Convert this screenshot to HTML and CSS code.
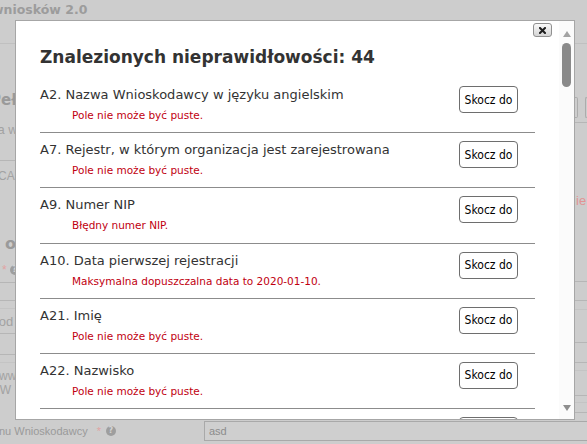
FILE: index.html
```html
<!DOCTYPE html>
<html lang="pl">
<head>
<meta charset="utf-8">
<title>Znalezione nieprawidłowości</title>
<link rel="stylesheet" href="styles.css">
</head>
<body>
<div class="page">
  <header class="bg-header"><span class="bg-brand">wniosków 2.0</span></header>
  <div class="bg-main">
    <div class="bg-col bg-left">
      <div class="l-title">Pełna</div>
      <div class="l-text1">Nazwa w języku</div>
      <div class="bg-line l-line1"></div>
      <div class="l-ca">CA</div>
      <div class="l-os">Dane osoby</div>
      <div class="l-help"><span class="req">*</span><span class="help">?</span></div>
      <div class="bg-line l-line2"></div>
      <div class="bg-line l-line3"></div>
      <div class="bg-line l-line4 light"></div>
      <div class="l-kod">Kod</div>
      <div class="bg-line l-line5"></div>
      <div class="bg-line l-line6"></div>
      <div class="bg-line l-line7 light"></div>
      <div class="l-ww">www</div>
      <div class="l-nw">Imien W</div>
    </div>
    <div class="bg-col bg-center"></div>
    <div class="bg-col bg-right">
      <div class="r-inputs"><span class="r-box1"></span><span class="r-box2"></span></div>
      <div class="bg-line r-line1"></div>
      <div class="r-ie">ie</div>
      <div class="bg-line r-l2"></div>
      <div class="bg-line r-l3"></div>
      <div class="bg-line r-l4 light"></div>
      <div class="bg-line r-l5"></div>
      <div class="bg-line r-l6"></div>
      <div class="bg-line r-l7 light"></div>
      <div class="bg-line r-l8"></div>
      <div class="bg-line r-l9 light"></div>
      <div class="bg-line r-l10"></div>
    </div>
  </div>
  <div class="bg-bottom">
    <div class="b-label"><span class="b-text">nu Wnioskodawcy</span><span class="req b-req">*</span><span class="help b-help">?</span></div>
    <div class="b-input">asd</div>
  </div>
</div>

<div class="dialog" role="dialog">
  <button class="dlg-close" type="button" aria-label="Zamknij">
    <svg width="7" height="7" viewBox="0 0 7 7"><path d="M1 1 L6 6 M6 1 L1 6" stroke="#1e1e1e" stroke-width="2" stroke-linecap="square"/></svg>
  </button>
  <div class="dlg-content">
    <h2 class="dlg-title">Znalezionych nieprawidłowości: 44</h2>
    <div class="err-item">
      <div class="item-text">
        <div class="item-label">A2. Nazwa Wnioskodawcy w języku angielskim</div>
        <div class="item-error">Pole nie może być puste.</div>
      </div>
      <button class="jump-btn" type="button">Skocz do</button>
    </div>
    <div class="err-item">
      <div class="item-text">
        <div class="item-label">A7. Rejestr, w którym organizacja jest zarejestrowana</div>
        <div class="item-error">Pole nie może być puste.</div>
      </div>
      <button class="jump-btn" type="button">Skocz do</button>
    </div>
    <div class="err-item">
      <div class="item-text">
        <div class="item-label">A9. Numer NIP</div>
        <div class="item-error">Błędny numer NIP.</div>
      </div>
      <button class="jump-btn" type="button">Skocz do</button>
    </div>
    <div class="err-item">
      <div class="item-text">
        <div class="item-label">A10. Data pierwszej rejestracji</div>
        <div class="item-error">Maksymalna dopuszczalna data to 2020-01-10.</div>
      </div>
      <button class="jump-btn" type="button">Skocz do</button>
    </div>
    <div class="err-item">
      <div class="item-text">
        <div class="item-label">A21. Imię</div>
        <div class="item-error">Pole nie może być puste.</div>
      </div>
      <button class="jump-btn" type="button">Skocz do</button>
    </div>
    <div class="err-item">
      <div class="item-text">
        <div class="item-label">A22. Nazwisko</div>
        <div class="item-error">Pole nie może być puste.</div>
      </div>
      <button class="jump-btn" type="button">Skocz do</button>
    </div>
    <div class="err-item">
      <div class="item-text"></div>
      <button class="jump-btn" type="button" aria-label="Skocz do"></button>
    </div>
  </div>
  <div class="dlg-scroll" aria-hidden="true">
    <span class="sb-up"></span>
    <span class="sb-thumb"></span>
    <span class="sb-spacer"></span>
    <span class="sb-down"></span>
  </div>
</div>
</body>
</html>
```
FILE: styles.css
```css
* { box-sizing: border-box; }
html, body { margin: 0; padding: 0; }
body {
  width: 587px;
  height: 444px;
  overflow: hidden;
  position: relative;
  background: #cdcdcd;
  font-family: "DejaVu Sans", Verdana, sans-serif;
}

/* ---------- background page (under overlay) ---------- */
.page { height: 444px; display: flex; flex-direction: column; }
.bg-header {
  flex: none;
  height: 44px;
  border-bottom: 1px solid #c0c0c0;
  overflow: hidden;
  white-space: nowrap;
}
.bg-brand {
  display: block;
  margin: 3px 0 0 -8px;
  font-weight: bold;
  font-size: 12.5px;
  line-height: 14px;
  color: #9c9c9c;
}
.bg-main {
  flex: none;
  height: 374px;
  display: grid;
  grid-template-columns: 15px 1fr 12px;
}
.bg-col { overflow: hidden; white-space: nowrap; font-family: "Liberation Sans", Arial, sans-serif; color: #a2a2a2; }
.bg-line { height: 0; border-top: 1px solid #b6b6b6; }
.bg-line.light { border-top-color: #c4c4c4; }

.l-title { margin-top: 49px; margin-left: -10px; font: bold 15px/15px "DejaVu Sans", Verdana, sans-serif; color: #9a9a9a; }
.l-text1 { margin-top: 15px; margin-left: -35px; font-size: 13px; line-height: 13px; }
.l-line1 { margin-top: 24px; }
.l-ca { margin-top: 9px; margin-left: -2px; font-size: 12px; line-height: 12px; }
.l-os { margin-top: 54px; margin-left: -47px; font: bold 16px/16px "DejaVu Sans", Verdana, sans-serif; color: #9a9a9a; }
.l-help { margin-top: 12px; height: 12px; display: flex; align-items: center; }
.req { color: #e2a3a3; font-size: 12px; line-height: 12px; }
.l-help .req { margin-left: 2px; }
.help {
  width: 10px; height: 10px; border-radius: 50%;
  background: #9e9e9e; color: #d4d4d4;
  font: bold 8px/10px "DejaVu Sans", sans-serif; text-align: center;
  flex: none;
}
.l-help .help { margin-left: 3px; }
.l-line2 { margin-top: 6px; }
.l-line3 { margin-top: 17px; }
.l-line4 { margin-top: 7px; }
.l-kod { margin-top: 6px; margin-left: -10px; font-size: 13px; line-height: 13px; }
.l-line5 { margin-top: 5px; }
.l-line6 { margin-top: 20px; }
.l-line7 { margin-top: 7px; }
.l-ww { margin-top: 7px; margin-left: -1px; font-size: 12px; line-height: 12px; }
.l-nw { margin-top: 2px; margin-left: -33px; font-size: 12px; line-height: 12px; }

.r-inputs { margin-top: 53px; height: 21px; display: flex; gap: 7px; }
.r-box1 { width: 3px; border: 1px solid #acacac; border-left: none; border-radius: 0 2px 2px 0; }
.r-box2 { flex: 1; border: 1px solid #acacac; border-right: none; border-radius: 2px 0 0 2px; }
.r-line1 { margin-top: 4px; }
.r-ie { margin-top: 71px; margin-left: 1px; font-size: 13px; line-height: 13px; color: #e29393; }
.r-l2 { margin-top: 74px; }
.r-l3 { margin-top: 18px; }
.r-l4 { margin-top: 8px; }
.r-l5 { margin-top: 32px; }
.r-l6 { margin-top: 19px; }
.r-l7 { margin-top: 7px; }
.r-l8 { margin-top: 24px; }
.r-l9 { margin-top: 6px; }
.r-l10 { margin-top: 9px; }

.bg-bottom {
  flex: 1;
  display: grid;
  grid-template-columns: 204px 1fr;
  padding-top: 3px;
  font-family: "Liberation Sans", Arial, sans-serif;
}
.b-label { display: flex; align-items: center; height: 20px; white-space: nowrap; }
.b-text { margin-left: -1px; font-size: 11px; line-height: 13px; color: #9a9a9a; }
.b-req { margin-left: 9px; font-size: 11px; line-height: 11px; }
.b-help { margin-left: 5px; }
.b-input {
  width: 420px;
  height: 20px;
  border: 1px solid #a9a9a9;
  background: #cfcfcf;
  color: #8c8c8c;
  font-size: 11px;
  line-height: 18px;
  padding-left: 4px;
}

/* ---------- dialog ---------- */
.dialog {
  position: absolute;
  left: 15px;
  top: 20px;
  width: 560px;
  height: 400px;
  background: #fff;
  border: 1px solid #a6a6a6;
  display: flex;
}
.dlg-close {
  position: absolute;
  top: 2px;
  right: 22px;
  width: 19px;
  height: 14px;
  padding: 0;
  border: 1px solid #909090;
  border-radius: 3px;
  background: linear-gradient(#fbfbfb, #d4d4d4);
  display: flex;
  align-items: center;
  justify-content: center;
}
.dlg-close svg { display: block; }
.dlg-content {
  flex: 1;
  min-width: 0;
  overflow: hidden;
  padding: 26px 24px 0;
}
.dlg-title {
  margin: 0 0 10px;
  font-size: 17px;
  line-height: 21px;
  font-weight: bold;
  color: #333;
}
.err-item {
  display: flex;
  justify-content: space-between;
  align-items: flex-start;
  height: 55.2px;
  padding-top: 8px;
  border-bottom: 1px solid #8c8c8c;
}
.item-text { padding-top: 1px; white-space: nowrap; }
.item-label { font-size: 13px; line-height: 16px; color: #333; }
.item-error { margin-top: 6px; padding-left: 32px; font-size: 10.5px; line-height: 13px; color: #bf0010; }
.jump-btn {
  flex: none;
  width: 59px;
  height: 27px;
  margin-right: 17px;
  padding: 0;
  border: 1px solid #6e6e6e;
  border-radius: 4px;
  background: #fff;
  color: #000;
  font-family: "DejaVu Sans Condensed", "DejaVu Sans", sans-serif;
  font-stretch: condensed;
  font-size: 12px;
}
.dlg-scroll {
  flex: none;
  width: 15px;
  background: #fbfbfb;
  display: flex;
  flex-direction: column;
  align-items: center;
}
.sb-up {
  margin-top: 10px;
  width: 0; height: 0;
  border-left: 4.5px solid transparent;
  border-right: 4.5px solid transparent;
  border-bottom: 6px solid #a3a3a3;
}
.sb-thumb {
  margin-top: 6px;
  width: 9px;
  height: 44px;
  border-radius: 5px;
  background: #8a8a8a;
}
.sb-spacer { flex: 1; }
.sb-down {
  margin-bottom: 8px;
  width: 0; height: 0;
  border-left: 4.5px solid transparent;
  border-right: 4.5px solid transparent;
  border-top: 6px solid #8e8e8e;
}
```
